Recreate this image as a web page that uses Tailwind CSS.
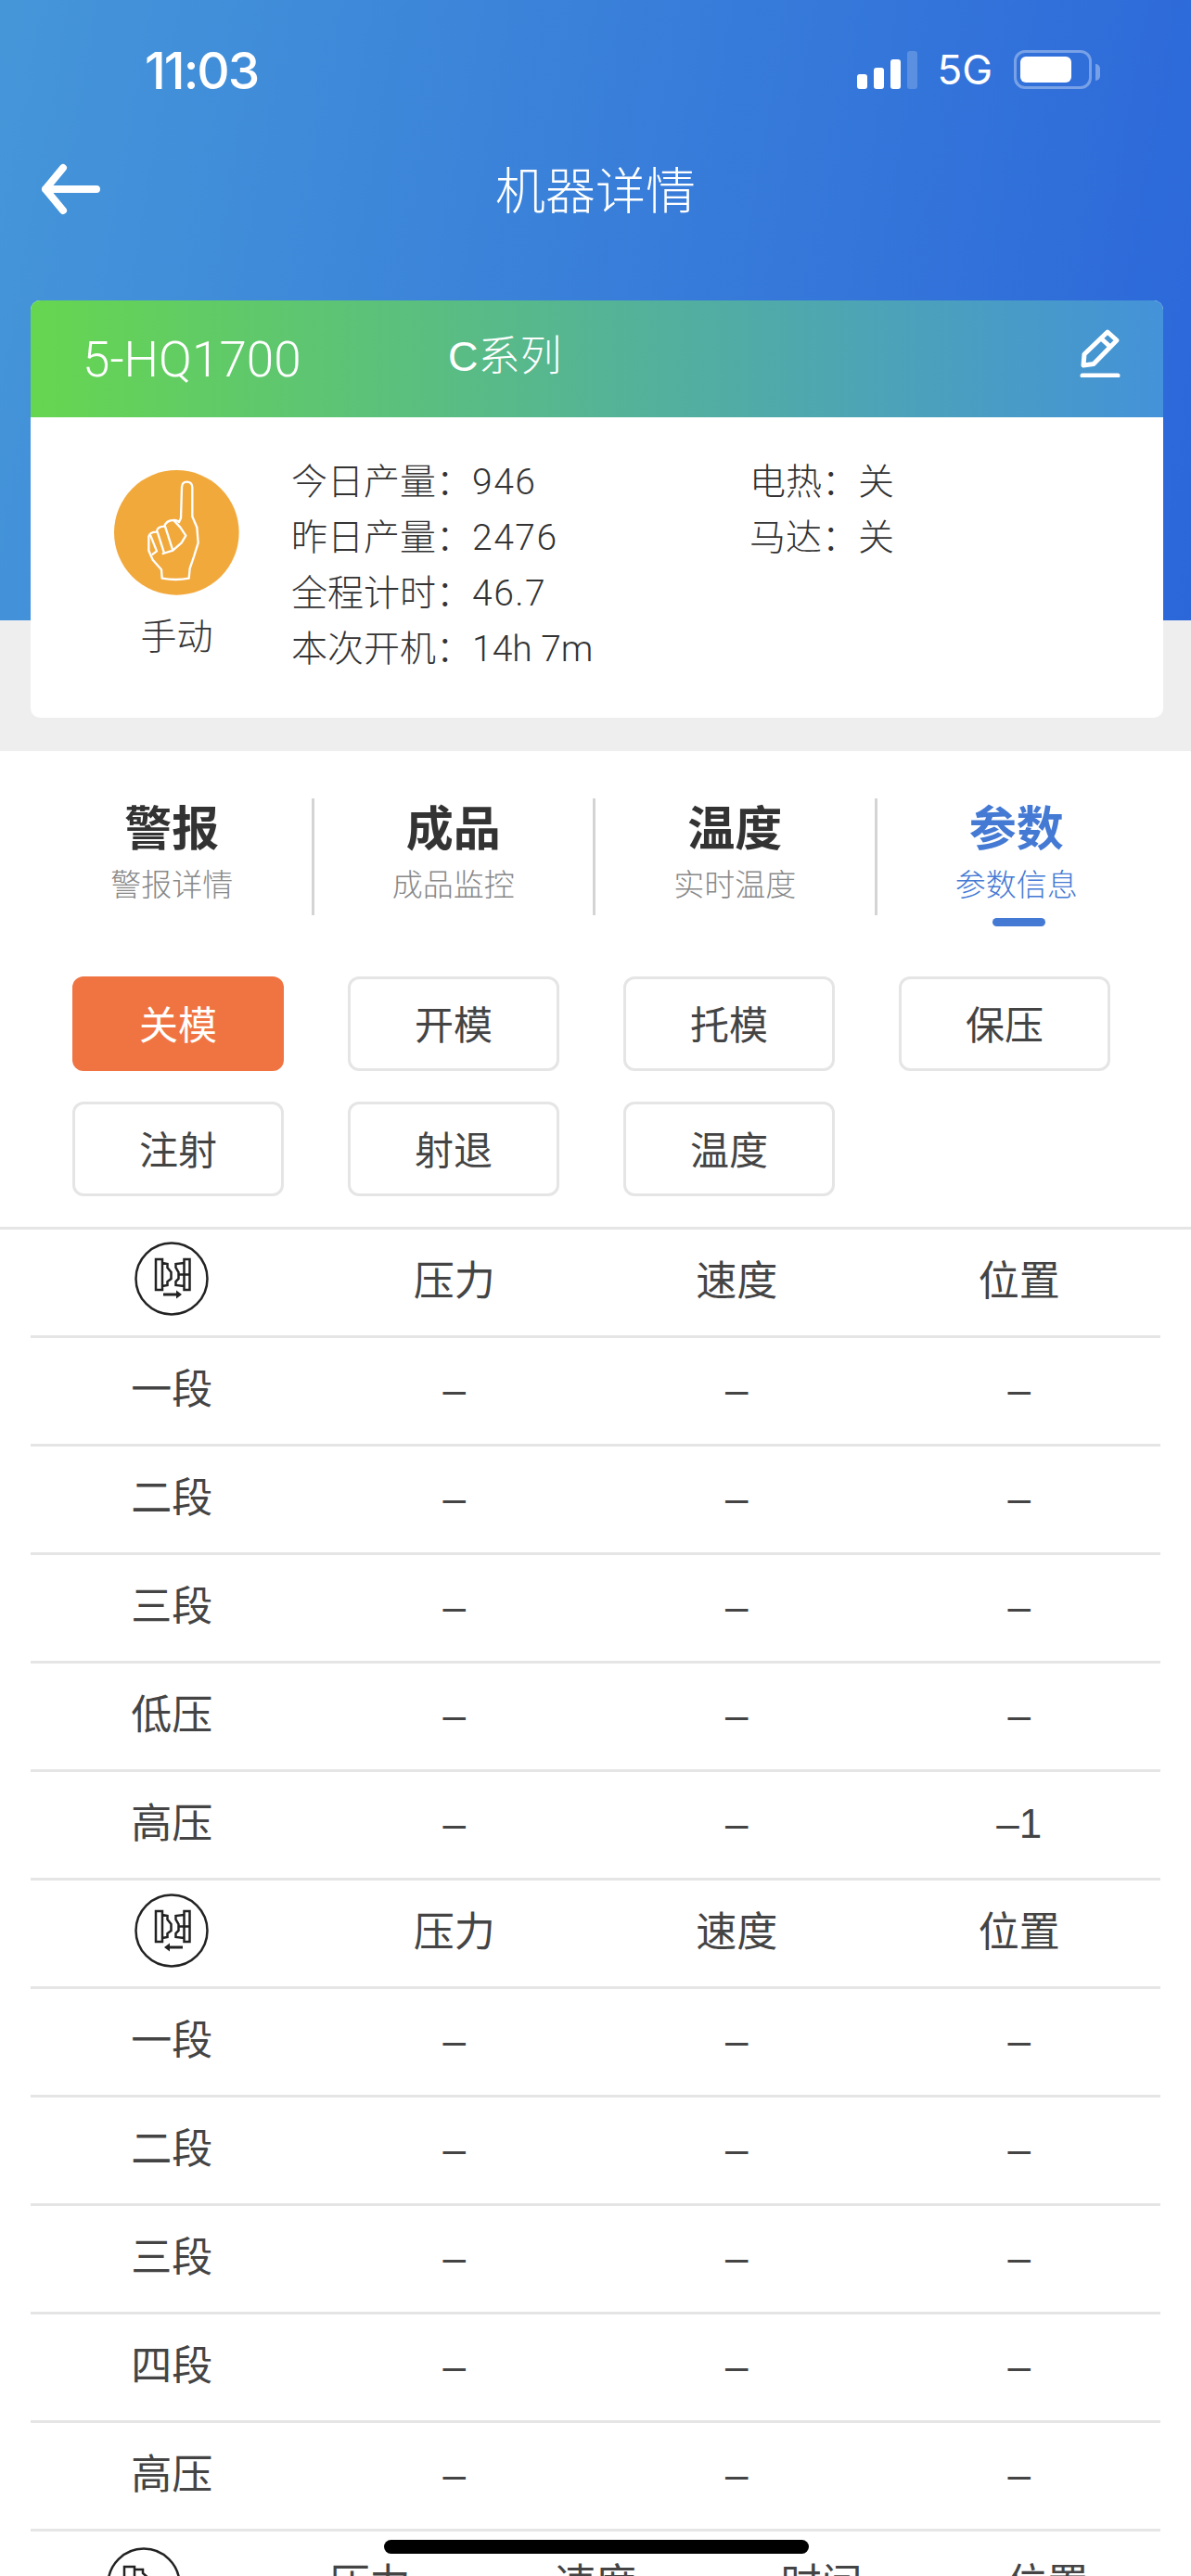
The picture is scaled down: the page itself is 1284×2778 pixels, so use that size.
<!DOCTYPE html>
<html lang="zh-CN">
<head>
  <meta charset="UTF-8" />
  <meta name="viewport" content="width=device-width, initial-scale=1" />
  <title>机器详情</title>
  <script src="https://cdn.jsdelivr.net/npm/@tailwindcss/browser@4"></script>
</head>
<body class="relative w-[1284px] h-[2778px] overflow-hidden bg-white font-['Liberation_Sans','Noto_Sans_CJK_SC',sans-serif] text-[#333]">

  <!-- Header and machine card -->
  <section class="h-[810px] px-[33px] bg-[#eeeeee] bg-no-repeat bg-[length:100%_669px] bg-[linear-gradient(100deg,#4596d9,#2c67da)]">
    <!-- Status bar -->
    <div class="h-[150px] -mx-[33px] flex text-white">
      <span class="ml-[156px] mt-[46px] text-[55px] leading-[60px] font-medium font-['Inter','Liberation_Sans',sans-serif] tracking-[-2px]">11:03</span>
      <div class="ml-auto mr-[98px] mt-[54px] h-[42px] flex items-end">
        <div class="flex items-end gap-[7px]">
          <span class="w-[11px] h-[16px] rounded-[3px] bg-white"></span>
          <span class="w-[11px] h-[23px] rounded-[3px] bg-white"></span>
          <span class="w-[11px] h-[32px] rounded-[3px] bg-white"></span>
          <span class="w-[11px] h-[41px] rounded-[3px] bg-white/20"></span>
        </div>
        <span class="ml-[21px] text-[44px] leading-[42px] font-['Inter','Liberation_Sans',sans-serif]">5G</span>
        <span class="ml-[23px] w-[84px] h-[42px] p-[4px] rounded-[12px] border-3 border-white/35">
          <span class="block w-[55px] h-[28px] rounded-[6px] bg-white"></span>
        </span>
        <span class="ml-[4px] mb-[9px] w-[5px] h-[18px] rounded-r-full bg-white/35"></span>
      </div>
    </div>

    <!-- Title bar -->
    <div class="relative h-[174px] -mx-[33px] flex justify-center pt-[24px] text-white">
      <svg class="absolute left-[44px] top-[26px]" width="66" height="58" viewBox="0 0 66 58" fill="none" stroke="#fff" stroke-width="8" stroke-linecap="round" stroke-linejoin="round">
        <path d="M24 5 L5 28 L24 51 M5 28 H60" />
      </svg>
      <h1 class="text-[54px] leading-[66px] font-light">机器详情</h1>
    </div>

    <!-- Machine card -->
    <div class="w-[1221px] h-[450px] rounded-[10px] overflow-hidden bg-white">
      <div class="h-[126px] flex items-center pl-[56px] pr-[46px] text-white bg-[linear-gradient(90deg,#66d650,#4492d9)]">
        <span class="w-[394px] mt-[2px] text-[53px] leading-[60px] font-light font-['Roboto','Liberation_Sans',sans-serif]">5-HQ1700</span>
        <span class="text-[45px] leading-[60px] font-light -mt-[4px]">C系列</span>
        <svg class="ml-auto -mt-[14px]" width="44" height="54" viewBox="0 0 44 54" fill="none" stroke="#fff" stroke-width="5" stroke-linejoin="round">
          <path d="M30 5 L40 14 L15 39.5 L4 41 L5 29 Z M22 11 L34 22" />
          <path d="M3 52 H41" stroke-width="5" stroke-linecap="round" />
        </svg>
      </div>
      <div class="flex pt-[40px] text-[39px] leading-[60px] font-light font-['Roboto','Noto_Sans_CJK_SC',sans-serif]">
        <div class="w-[281px] flex flex-col items-center pl-[66px] pr-[32px] pt-[17px]">
          <svg width="135" height="135" viewBox="100 50 405 405" fill="none" stroke="#fff" stroke-width="7" stroke-linejoin="round" stroke-linecap="round">
            <circle cx="302" cy="252" r="202" fill="#f2a93c" stroke="none" />
            <path d="M316 205 L319 105 Q320 88 335 88 Q352 88 353 105 L353 200 L368 235 L372 285 L358 330 L345 368 L342 400 Q300 408 255 400 L253 372 L225 340 L212 310 L212 265 Q216 250 237 250 Q240 232 262 232 Q270 212 292 212 Q300 210 310 218 L316 205" />
            <path d="M218 262 L238 312 L225 322 M240 250 L262 318 M265 232 L290 310 L258 320 M295 215 L314 235 L332 262 L318 285 L290 310" />
          </svg>
          <span class="mt-[15px] text-[39px] leading-[60px]">手动</span>
        </div>
        <div class="w-[494px]">
          <p>今日产量：<span class="tracking-[1.5px]">946</span></p>
          <p>昨日产量：<span class="tracking-[1.5px]">2476</span></p>
          <p>全程计时：<span class="tracking-[1.5px]">46.7</span></p>
          <p>本次开机：14h 7m</p>
        </div>
        <div>
          <p>电热：关</p>
          <p>马达：关</p>
        </div>
      </div>
    </div>
  </section>

  <!-- Tabs -->
  <nav class="grid grid-cols-4 w-[1214px] ml-[35px] mt-[51px] h-[126px] text-center">
    <div class="border-r-3 border-[#d4d4d4]">
      <p class="text-[51px] leading-[68px] font-bold">警报</p>
      <p class="text-[33px] leading-[50px] mt-[1px] text-[#888] font-light">警报详情</p>
    </div>
    <div class="border-r-3 border-[#d4d4d4]">
      <p class="text-[51px] leading-[68px] font-bold">成品</p>
      <p class="text-[33px] leading-[50px] mt-[1px] text-[#888] font-light">成品监控</p>
    </div>
    <div class="border-r-3 border-[#d4d4d4]">
      <p class="text-[51px] leading-[68px] font-bold">温度</p>
      <p class="text-[33px] leading-[50px] mt-[1px] text-[#888] font-light">实时温度</p>
    </div>
    <div class="relative pr-[3px] text-[#4479d4]">
      <p class="text-[51px] leading-[68px] font-bold">参数</p>
      <p class="text-[33px] leading-[50px] mt-[1px] font-light">参数信息</p>
      <span class="absolute left-[124px] top-[129px] w-[57px] h-[9px] rounded-full bg-[#4479d4]"></span>
    </div>
  </nav>

  <!-- Parameter groups -->
  <div class="grid grid-cols-[repeat(4,228px)] gap-x-[69px] gap-y-[33px] ml-[78px] mt-[66px] text-[42px] text-[#444]">
    <button class="h-[102px] pt-[4px] rounded-[12px] bg-[#f07442] text-white">关模</button>
    <button class="h-[102px] pt-[4px] rounded-[12px] border-3 border-[#e5e5e5]">开模</button>
    <button class="h-[102px] pt-[4px] rounded-[12px] border-3 border-[#e5e5e5]">托模</button>
    <button class="h-[102px] pt-[4px] rounded-[12px] border-3 border-[#e5e5e5]">保压</button>
    <button class="h-[102px] pt-[4px] rounded-[12px] border-3 border-[#e5e5e5]">注射</button>
    <button class="h-[102px] pt-[4px] rounded-[12px] border-3 border-[#e5e5e5]">射退</button>
    <button class="h-[102px] pt-[4px] rounded-[12px] border-3 border-[#e5e5e5]">温度</button>
  </div>

  <!-- Parameter table -->
  <div class="mt-[33px] border-t-3 border-[#e5e5e5]">
    <div class="mx-[33px] text-[44px] text-[#444] text-center">
      <div class="grid grid-cols-4 items-center h-[117px] pb-[3px] border-b-3 border-[#e5e5e5]">
        <div class="flex justify-center -mt-[5px]">
          <svg width="80" height="80" viewBox="0 0 80 80" fill="none" stroke="#222" stroke-width="2.5">
            <circle cx="40" cy="40" r="38.5" />
            <path d="M23 19 H30 V52 H23 Z M30 23 L35.5 24 V28 L39.5 33 V40 L35.5 43 V47 L30 48 M53.5 19 H59.5 V52 H53.5 Z M53.5 23 L44.5 24 V28 L47.5 33 V40 L44.5 43 V47 L53.5 48 M47.5 35.5 H59.5" />
            <path d="M31 57 H47" stroke-width="3" />
            <path d="M45 52.5 L51 57 L45 61.5 Z" fill="#222" stroke="none" />
          </svg>
        </div>
        <div>压力</div><div>速度</div><div>位置</div>
      </div>
      <div class="grid grid-cols-4 items-center h-[117px] pb-[3px] border-b-3 border-[#e5e5e5]"><div>一段</div><div>–</div><div>–</div><div>–</div></div>
      <div class="grid grid-cols-4 items-center h-[117px] pb-[3px] border-b-3 border-[#e5e5e5]"><div>二段</div><div>–</div><div>–</div><div>–</div></div>
      <div class="grid grid-cols-4 items-center h-[117px] pb-[3px] border-b-3 border-[#e5e5e5]"><div>三段</div><div>–</div><div>–</div><div>–</div></div>
      <div class="grid grid-cols-4 items-center h-[117px] pb-[3px] border-b-3 border-[#e5e5e5]"><div>低压</div><div>–</div><div>–</div><div>–</div></div>
      <div class="grid grid-cols-4 items-center h-[117px] pb-[3px] border-b-3 border-[#e5e5e5]"><div>高压</div><div>–</div><div>–</div><div>–1</div></div>

      <div class="grid grid-cols-4 items-center h-[117px] pb-[3px] border-b-3 border-[#e5e5e5]">
        <div class="flex justify-center -mt-[3px]">
          <svg width="80" height="80" viewBox="0 0 80 80" fill="none" stroke="#222" stroke-width="2.5">
            <circle cx="40" cy="40" r="38.5" />
            <path d="M23 19 H30 V52 H23 Z M30 23 L35.5 24 V28 L39.5 33 V40 L35.5 43 V47 L30 48 M53.5 19 H59.5 V52 H53.5 Z M53.5 23 L44.5 24 V28 L47.5 33 V40 L44.5 43 V47 L53.5 48 M47.5 35.5 H59.5" />
            <path d="M36 58 H52" stroke-width="3" />
            <path d="M38 53.5 L32 58 L38 62.5 Z" fill="#222" stroke="none" />
          </svg>
        </div>
        <div>压力</div><div>速度</div><div>位置</div>
      </div>
      <div class="grid grid-cols-4 items-center h-[117px] pb-[3px] border-b-3 border-[#e5e5e5]"><div>一段</div><div>–</div><div>–</div><div>–</div></div>
      <div class="grid grid-cols-4 items-center h-[117px] pb-[3px] border-b-3 border-[#e5e5e5]"><div>二段</div><div>–</div><div>–</div><div>–</div></div>
      <div class="grid grid-cols-4 items-center h-[117px] pb-[3px] border-b-3 border-[#e5e5e5]"><div>三段</div><div>–</div><div>–</div><div>–</div></div>
      <div class="grid grid-cols-4 items-center h-[117px] pb-[3px] border-b-3 border-[#e5e5e5]"><div>四段</div><div>–</div><div>–</div><div>–</div></div>
      <div class="grid grid-cols-4 items-center h-[117px] pb-[3px] border-b-3 border-[#e5e5e5]"><div>高压</div><div>–</div><div>–</div><div>–</div></div>

      <div class="grid grid-cols-5 items-center h-[117px] pb-[3px]">
        <div class="flex justify-center">
          <svg width="80" height="80" viewBox="0 0 80 80" fill="none" stroke="#222" stroke-width="2.5">
            <circle cx="40" cy="40" r="38.5" />
            <path d="M19 21 H30 V60 H19 Z M30 24 H39 V28 L46 34 V50 L30 56" />
          </svg>
        </div>
        <div>压力</div><div>速度</div><div>时间</div><div>位置</div>
      </div>
    </div>
  </div>

  <!-- Home indicator -->
  <div class="absolute left-[414px] top-[2739px] w-[458px] h-[15px] rounded-full bg-black"></div>
</body>
</html>
